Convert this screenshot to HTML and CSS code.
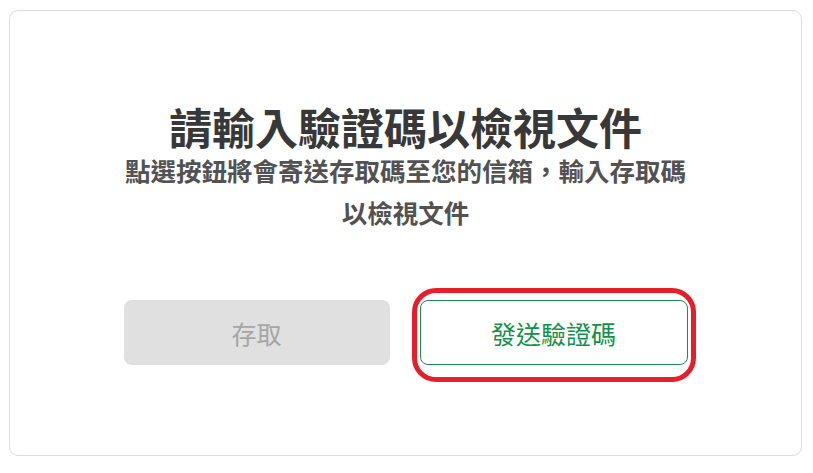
FILE: index.html
```html
<!DOCTYPE html>
<html lang="zh-Hant">
<head>
<meta charset="utf-8">
<title>請輸入驗證碼以檢視文件</title>
<link rel="stylesheet" href="styles.css">
</head>
<body>
<div class="card">
  <h1 class="title">請輸入驗證碼以檢視文件</h1>
  <p class="subtitle">點選按鈕將會寄送存取碼至您的信箱，輸入存取碼以檢視文件</p>
  <div class="actions">
    <button class="btn btn-disabled" disabled>存取</button>
    <button class="btn btn-send">發送驗證碼</button>
  </div>
</div>
</body>
</html>
```
FILE: styles.css
```css
html, body {
  margin: 0;
  padding: 0;
  background: #ffffff;
}
body {
  padding: 10px 11px 0 9px;
  font-family: "Noto Sans CJK TC", "Noto Sans", sans-serif;
}
.card {
  box-sizing: border-box;
  height: 446px;
  border: 1px solid #dcdcdc;
  border-radius: 9px;
  display: flex;
  flex-direction: column;
  align-items: center;
  padding-top: 92px;
}
.title {
  margin: 0;
  font-size: 43px;
  line-height: 46px;
  font-weight: 700;
  color: #383838;
  text-align: center;
}
.subtitle {
  margin: 0;
  max-width: 575px;
  font-size: 25.5px;
  line-height: 42px;
  font-weight: 700;
  color: #525252;
  text-align: center;
}
.actions {
  margin-top: 67px;
  display: flex;
  gap: 30px;
}
.btn {
  box-sizing: border-box;
  height: 65px;
  border-radius: 8px;
  font-family: inherit;
  font-size: 25px;
  font-weight: 400;
  display: flex;
  align-items: center;
  justify-content: center;
  padding: 0;
}
.btn-disabled {
  width: 266px;
  background: #e0e0e0;
  border: none;
  color: #a6a6a6;
}
.btn-send {
  position: relative;
  width: 268px;
  background: #ffffff;
  border: 1px solid #1f8a4f;
  color: #13904c;
}
.btn-send::after {
  content: "";
  position: absolute;
  left: -9px;
  right: -9px;
  top: -13px;
  bottom: -18px;
  border: 5px solid #e41f2b;
  border-radius: 24px;
  pointer-events: none;
}
```
